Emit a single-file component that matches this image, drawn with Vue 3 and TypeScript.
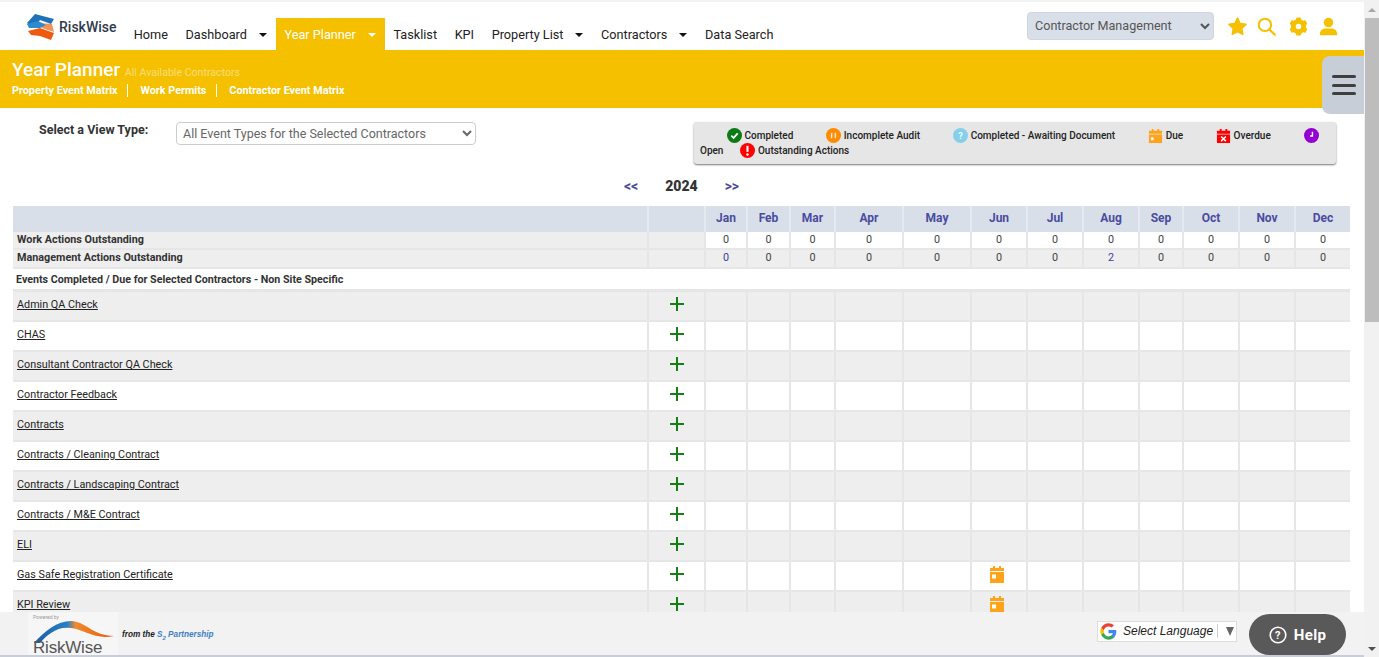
<script setup lang="ts">
interface NavItem {
  label: string
  caret?: boolean
  active?: boolean
}

interface Row {
  name: string
  due?: boolean
}

const nav: NavItem[] = [
  { label: 'Home' },
  { label: 'Dashboard', caret: true },
  { label: 'Year Planner', caret: true, active: true },
  { label: 'Tasklist' },
  { label: 'KPI' },
  { label: 'Property List', caret: true },
  { label: 'Contractors', caret: true },
  { label: 'Data Search' },
]

const months = ['Jan', 'Feb', 'Mar', 'Apr', 'May', 'Jun', 'Jul', 'Aug', 'Sep', 'Oct', 'Nov', 'Dec']
const colWidths = [42, 43, 45, 68, 68, 56, 56, 56, 44, 56, 56, 56]
const workActions = [0, 0, 0, 0, 0, 0, 0, 0, 0, 0, 0, 0]
const mgmtActions = [0, 0, 0, 0, 0, 0, 0, 2, 0, 0, 0, 0]
const gearTeeth = [0, 60, 120, 180, 240, 300]

const rows: Row[] = [
  { name: 'Admin QA Check' },
  { name: 'CHAS' },
  { name: 'Consultant Contractor QA Check' },
  { name: 'Contractor Feedback' },
  { name: 'Contracts' },
  { name: 'Contracts / Cleaning Contract' },
  { name: 'Contracts / Landscaping Contract' },
  { name: 'Contracts / M&E Contract' },
  { name: 'ELI' },
  { name: 'Gas Safe Registration Certificate', due: true },
  { name: 'KPI Review', due: true },
]
</script>

<template>
  <div class="page">
    <div class="content">
      <header class="topbar">
        <div class="logo">
          <svg width="30" height="28" viewBox="0 0 30 28">
            <path d="M12 10 L26 11 L28 19 L16 15 Z" fill="#f0925a" />
            <path d="M9 1 L28 6 L25 11 L14 7 L11 11 L3 12 L1 10 Z" fill="#1f72b8" />
            <path d="M1 11 L12 8 L20 12 L14 15 L3 15 Z" fill="#2c8bd0" />
            <path d="M2 18 L14 15 L28 20 L25 27 L14 23 L5 22 Z" fill="#ee5a12" />
          </svg>
          <span class="logo-text">RiskWise</span>
        </div>
        <nav class="nav">
          <a v-for="item in nav" :key="item.label" class="nav-item" :class="{ active: item.active }">
            {{ item.label }}<i v-if="item.caret" class="caret" />
          </a>
        </nav>
        <div class="tools">
          <select class="module-select">
            <option>Contractor Management</option>
          </select>
          <svg class="tool star" viewBox="0 0 24 24"><path d="M12 1.500 L15.300 8.200 L22.700 9.300 L17.300 14.500 L18.600 21.900 L12 18.400 L5.400 21.900 L6.700 14.500 L1.300 9.300 L8.700 8.200 Z" fill="#f5c000" stroke="#f5c000" stroke-width="2" stroke-linejoin="round" /></svg>
          <svg class="tool search" viewBox="0 0 24 24"><circle cx="10" cy="10" r="7.800" fill="none" stroke="#f5c000" stroke-width="2.600" /><path d="M15.800 15.800 L22.500 22.500" stroke="#f5c000" stroke-width="2.800" stroke-linecap="round" /></svg>
          <svg class="tool" viewBox="0 0 24 24">
            <circle cx="12" cy="12" r="6.500" fill="none" stroke="#f5c000" stroke-width="6" />
            <rect v-for="a in gearTeeth" :key="a" x="9" y="0.500" width="6" height="5" rx="1.200" fill="#f5c000" :transform="`rotate(${a} 12 12)`" />
          </svg>
          <svg class="tool" viewBox="0 0 24 24"><circle cx="12" cy="7" r="6" fill="#f5c000" /><path d="M1 23 C1 17 4 14.500 8 14.500 H16 C20 14.500 23 17 23 23 Z" fill="#f5c000" /></svg>
        </div>
      </header>

      <section class="band">
        <div class="band-title">Year Planner <small>All Available Contractors</small></div>
        <div class="band-links">
          <a>Property Event Matrix</a>
          <a>Work Permits</a>
          <a>Contractor Event Matrix</a>
        </div>
        <button class="burger"><span /><span /><span /></button>
      </section>

      <main class="main">
        <div class="filters">
          <label class="view-label">Select a View Type:</label>
          <select class="view-select">
            <option>All Event Types for the Selected Contractors</option>
          </select>
          <div class="legend">
            <svg class="lg" viewBox="0 0 16 16"><circle cx="8" cy="8" r="8" fill="#0b7a14" /><path d="M4.600 8.200 L7 10.600 L11.400 5.800" fill="none" stroke="#fff" stroke-width="1.800" /></svg> <span class="lt">Completed</span>
            <svg class="lg gap" viewBox="0 0 16 16"><circle cx="8" cy="8" r="8" fill="#ff8c00" /><path d="M6 5 V11 M10 5 V11" stroke="#fff" stroke-width="1.600" opacity=".8" /></svg> <span class="lt">Incomplete Audit</span>
            <svg class="lg gap" viewBox="0 0 16 16"><circle cx="8" cy="8" r="8" fill="#87ceeb" /><text x="8" y="11.500" text-anchor="middle" font-size="10" font-weight="700" fill="#dff" font-family="Roboto">?</text></svg> <span class="lt">Completed - Awaiting Document</span>
            <svg class="lg gap" viewBox="0 0 16 16"><path d="M1 3 H4 V1 H6 V3 H10 V1 H12 V3 H15 V6 H1 Z M1 7 H15 V16 H1 Z" fill="#ffa31a" /><rect x="3" y="10" width="3" height="3" fill="#fff" /></svg> <span class="lt">Due</span>
            <svg class="lg gap" viewBox="0 0 16 16"><path d="M1 3 H4 V1 H6 V3 H10 V1 H12 V3 H15 V6 H1 Z M1 7 H15 V16 H1 Z" fill="#f00" /><path d="M5.500 9 L10.500 14 M10.500 9 L5.500 14" stroke="#fff" stroke-width="1.600" /></svg> <span class="lt">Overdue</span>
            <svg class="lg gap" viewBox="0 0 16 16"><circle cx="8" cy="8" r="8" fill="#9400d3" /><path d="M8 4 V8.500 H5.500" transform="translate(1 0)" fill="none" stroke="#fff" stroke-width="1.500" /></svg> <span class="lt">Open</span>
            <svg class="lg gap-sm" viewBox="0 0 16 16"><circle cx="8" cy="8" r="8" fill="#f00" /><path d="M8 3 V9.500" stroke="#fff" stroke-width="2.200" /><circle cx="8" cy="12.200" r="1.300" fill="#fff" /></svg> <span class="lt">Outstanding Actions</span>
          </div>
        </div>

        <div class="year-nav">
          <a>&lt;&lt;</a>
          <strong>2024</strong>
          <a>&gt;&gt;</a>
        </div>

        <table class="grid">
          <colgroup>
            <col style="width: 634px" />
            <col style="width: 57px" />
            <col v-for="(w, i) in colWidths" :key="i" :style="{ width: w + 'px' }" />
          </colgroup>
          <thead>
            <tr class="head">
              <th /><th />
              <th v-for="m in months" :key="m">{{ m }}</th>
            </tr>
          </thead>
          <tbody>
            <tr class="count-row work">
              <td class="label"><b>Work Actions Outstanding</b></td>
              <td class="grey" />
              <td v-for="(n, i) in workActions" :key="i" class="num">{{ n }}</td>
            </tr>
            <tr class="count-row mgmt">
              <td class="label"><b>Management Actions Outstanding</b></td>
              <td />
              <td v-for="(n, i) in mgmtActions" :key="i" class="num" :class="{ linked: i === 0 || n > 0 }">{{ n }}</td>
            </tr>
            <tr class="section-row">
              <td colspan="14"><b>Events Completed / Due for Selected Contractors - Non Site Specific</b></td>
            </tr>
            <tr v-for="(row, r) in rows" :key="row.name" class="event-row" :class="{ odd: r % 2 === 0 }">
              <td class="label"><a>{{ row.name }}</a></td>
              <td class="center">
                <svg class="plus" viewBox="0 0 14 14"><path d="M7 0 V14 M0 7 H14" stroke="#128012" stroke-width="2" /></svg>
              </td>
              <td v-for="(m, i) in months" :key="m" class="center">
                <svg v-if="row.due && i === 5" class="cal" viewBox="0 0 16 18"><path d="M1 3 H4 V1 H6 V3 H10 V1 H12 V3 H15 V6 H1 Z M1 7 H15 V18 H1 Z" fill="#ffa31a" /><rect x="3" y="9.500" width="4" height="4" fill="#fff" /></svg>
              </td>
            </tr>
          </tbody>
        </table>
      </main>

      <footer class="footer">
        <div class="foot-logo">
          <span class="powered">Powered by</span>
          <svg class="swoosh" width="82" height="26" viewBox="0 0 82 26">
            <defs>
              <linearGradient id="sw" x1="0" y1="0" x2="1" y2="0">
                <stop offset="0" stop-color="#1b5fa8" />
                <stop offset=".42" stop-color="#2b7fc4" />
                <stop offset=".52" stop-color="#f08a2c" />
                <stop offset="1" stop-color="#e8590c" />
              </linearGradient>
            </defs>
            <path d="M1 24 C12 12 24 2 38 2 C52 2 60 17 81 17 C62 21 52 11 38 9 C24 7 14 16 7 24 Z" fill="url(#sw)" />
          </svg>
          <span class="foot-name">RiskWise</span>
        </div>
        <span class="partner">from the <em>S<sub>2</sub> Partnership</em></span>
        <div class="lang">
          <svg width="17" height="17" viewBox="0 0 24 24">
            <path d="M23 12.300c0-.8-.1-1.600-.2-2.300H12v4.400h6.200c-.3 1.400-1.100 2.600-2.300 3.400v2.900h3.700c2.100-2 3.400-4.900 3.400-8.400Z" fill="#4285f4" />
            <path d="M12 23.500c3.100 0 5.700-1 7.600-2.800l-3.700-2.900c-1 .7-2.300 1.100-3.900 1.100-3 0-5.500-2-6.400-4.800H1.800v3c1.900 3.800 5.800 6.400 10.200 6.400Z" fill="#34a853" />
            <path d="M5.600 14.100c-.5-1.400-.5-2.900 0-4.300v-3H1.800a11.500 11.500 0 0 0 0 10.300Z" fill="#fbbc05" />
            <path d="M12 4.800c1.700 0 3.200.6 4.400 1.700l3.300-3.300C17.700 1.400 15.100.4 12 .4 7.600.4 3.700 3 1.800 6.800l3.800 3C6.500 6.900 9 4.800 12 4.800Z" fill="#ea4335" />
          </svg>
          <span class="lang-text">Select Language</span>
          <span class="lang-arrow" />
        </div>
        <button class="help">
          <svg width="18" height="18" viewBox="0 0 18 18">
            <circle cx="9" cy="9" r="7.800" fill="none" stroke="#fff" stroke-width="1.600" />
            <text x="9" y="13" text-anchor="middle" font-size="11" font-weight="700" fill="#fff" font-family="Roboto">?</text>
          </svg>
          Help
        </button>
      </footer>
    </div>

    <div class="scrollbar">
      <i class="arrow up" />
      <div class="thumb" />
      <i class="arrow down" />
    </div>
  </div>
</template>

<style scoped>
.page {
  display: flex;
  height: 657px;
  overflow: hidden;
  font-family: Roboto, "Liberation Sans", sans-serif;
  color: #333;
  background: #fff;
}

.content {
  flex: 1;
  min-width: 0;
  display: flex;
  flex-direction: column;
}

.topbar {
  height: 50px;
  flex: none;
  display: flex;
  align-items: flex-end;
  border-top: 2px solid #f3f3f3;
  box-sizing: border-box;
}

.logo {
  width: 125px;
  height: 48px;
  padding-left: 26px;
  box-sizing: border-box;
  display: flex;
  align-items: flex-start;
  padding-top: 11px;
  gap: 3px;
  flex: none;
}

.logo-text {
  font-size: 14px;
  font-weight: 500;
  color: #2f3b4c;
  margin-top: 6px;
}

.nav {
  display: flex;
  height: 32px;
}

.nav-item {
  display: flex;
  align-items: center;
  height: 32px;
  padding: 1px 8.800px 0;
  font-size: 12.700px;
  color: #222;
  white-space: nowrap;
  box-sizing: border-box;
}

.nav-item.active {
  background: #f5c000;
  color: #fff;
}

.caret {
  margin-left: 12px;
  border-left: 4.500px solid transparent;
  border-right: 4.500px solid transparent;
  border-top: 4.500px solid #111;
}

.active .caret {
  border-top-color: #fff;
}

.tools {
  position: absolute;
  top: 12px;
  left: 1027px;
  display: flex;
  align-items: center;
}

.module-select {
  width: 187px;
  height: 28px;
  margin-right: 14px;
  padding: 0 0 2px 3px;
  background: #d9dfe9;
  border: 1px solid #d0d6e0;
  border-radius: 4px;
  font: 12.600px Roboto, sans-serif;
  color: #555;
}

.tool {
  width: 19px;
  height: 19px;
  margin-right: 11px;
}

.tool.star {
  margin-right: 10px;
}

.tool.search {
  margin-right: 13px;
}

.band {
  height: 58px;
  flex: none;
  position: relative;
  background: #f5c000;
  color: #fff;
  padding: 10px 12px 0;
  box-sizing: border-box;
}

.band-title {
  font-size: 19px;
  font-weight: 500;
  line-height: 20px;
}

.band-title small {
  font-size: 10.600px;
  font-weight: 400;
  color: #f9dc7a;
}

.band-links {
  display: flex;
  margin-top: 1px;
  font-size: 10.800px;
  font-weight: 700;
  line-height: 13px;
}

.band-links a {
  padding-right: 10px;
  margin-right: 12px;
  border-right: 1px solid #fff;
}

.band-links a:last-child {
  border-right: 0;
}

.burger {
  position: absolute;
  top: 6px;
  right: 0;
  width: 42px;
  height: 58px;
  padding: 0 0 0 10px;
  border: 0;
  border-radius: 8px 0 0 8px;
  background: #c8ced8;
  display: flex;
  flex-direction: column;
  gap: 5.500px;
  justify-content: center;
}

.burger span {
  width: 24px;
  height: 3px;
  border-radius: 2px;
  background: #3f3f3f;
}

.main {
  flex: 1;
  min-height: 0;
  overflow: hidden;
  padding: 0 14px 0 13px;
}

.filters {
  height: 56px;
  position: relative;
  display: flex;
  align-items: flex-start;
  padding-top: 14px;
  box-sizing: border-box;
}

.view-label {
  margin-left: 26px;
  width: 137px;
  font-size: 12.500px;
  font-weight: 700;
  line-height: 15px;
  flex: none;
}

.view-select {
  width: 300px;
  height: 23px;
  padding-left: 2px;
  background: #fff;
  border: 1px solid #ccc;
  border-radius: 4px;
  font: 12.500px Roboto, sans-serif;
  color: #666;
  flex: none;
}

.legend {
  position: absolute;
  top: 14px;
  left: 681px;
  width: 642px;
  height: 42px;
  box-sizing: border-box;
  padding: 6px 6px 0;
  background: #e6e6e6;
  border-radius: 3px;
  box-shadow: 0 1px 2px #777;
  font-size: 10px;
  font-weight: 500;
  line-height: 15px;
  color: #222;
}

.lg {
  width: 15px;
  height: 15px;
  vertical-align: -4px;
  margin-left: 27px;
}

.lg.gap {
  margin-left: 33px;
}

.lg.gap-sm {
  margin-left: 17px;
}

.year-nav {
  display: flex;
  justify-content: center;
  align-items: center;
  height: 42px;
  gap: 27px;
  padding-top: 2px;
  box-sizing: border-box;
  font-size: 14px;
  font-weight: 700;
  color: #4a4a9c;
}

.year-nav strong {
  color: #333;
}

.grid {
  width: 1337px;
  table-layout: fixed;
  border-collapse: separate;
  border-spacing: 0;
  font-size: 10.800px;
}

.grid td,
.grid th {
  padding: 0;
  border-left: 2px solid #e6e6e6;
  border-bottom: 2px solid #e6e6e6;
  box-sizing: border-box;
}

.grid td:first-child,
.grid th:first-child {
  border-left: 0;
}

.head th {
  height: 26px;
  padding-bottom: 2px;
  background: #d9dfe9;
  border-color: #e6eaf0;
  border-bottom: 0;
  color: #4a4ca0;
  font-size: 12px;
  font-weight: 700;
}

.count-row td {
  height: 18px;
  background: #eee;
}

.count-row.work td {
  padding-bottom: 1px;
}

.count-row.mgmt td {
  height: 19px;
  padding-bottom: 2px;
}

.count-row.work .num {
  background: #fff;
}

.num {
  text-align: center;
  color: #444;
}

.num.linked {
  color: #3f3f9e;
}

.label {
  padding-left: 4px !important;
  color: #333;
}

.label b {
  font-weight: 700;
}

.section-row td {
  height: 23px;
  padding-left: 3px;
  background: #fff;
  font-size: 10.700px;
  font-weight: 700;
  color: #333;
  border-left: 0;
  border-bottom: 3px solid #e6e6e6;
}

.section-row b {
  font-weight: 700;
}

.event-row td {
  height: 30px;
  background: #fff;
}

.event-row.odd td {
  background: #eee;
}

.event-row .label {
  vertical-align: middle;
  padding-bottom: 3px !important;
}

.event-row a {
  color: #222;
  text-decoration: underline;
}

.center {
  text-align: center;
  vertical-align: middle;
}

.plus {
  width: 14px;
  height: 14px;
  display: block;
  margin: 0 auto 5px;
}

.cal {
  width: 16px;
  height: 18px;
  display: block;
  margin: 0 auto 5px;
  transform: translateX(-2px);
}

.footer {
  height: 45px;
  flex: none;
  position: relative;
  display: flex;
  align-items: center;
  background: #f2f2f2;
  border-bottom: 2px solid #c8ced8;
  box-sizing: border-box;
}

.foot-logo {
  position: relative;
  width: 90px;
  height: 43px;
  margin-left: 28px;
  background: #f6f6f6;
  flex: none;
}

.powered {
  position: absolute;
  top: 2px;
  left: 5px;
  font-size: 5px;
  color: #999;
}

.swoosh {
  position: absolute;
  top: 7px;
  left: 5px;
}

.foot-name {
  position: absolute;
  left: 5px;
  bottom: -3px;
  font: 17px "Liberation Sans", sans-serif;
  color: #555;
  letter-spacing: -.2px;
}

.partner {
  margin: 3px 0 0 4px;
  font: italic 700 8.200px "Liberation Sans", sans-serif;
  color: #222;
}

.partner em {
  color: #3f7fc4;
}

.partner sub {
  font-size: 6px;
}

.lang {
  position: absolute;
  left: 1097px;
  top: 9px;
  width: 140px;
  height: 21px;
  box-sizing: border-box;
  display: flex;
  align-items: center;
  padding-left: 2px;
  background: #fff;
  border: 1px solid #ddd;
}

.lang-text {
  margin: 0 0 2px 6px;
  padding-right: 4px;
  border-right: 1px solid #ccc;
  font: italic 12px "Liberation Sans", sans-serif;
  color: #222;
}

.lang-arrow {
  margin-left: 8px;
  border-left: 4.500px solid transparent;
  border-right: 4.500px solid transparent;
  border-top: 9px solid #666;
}

.help {
  position: absolute;
  left: 1249px;
  top: 2px;
  width: 97px;
  height: 41px;
  display: flex;
  align-items: center;
  justify-content: center;
  gap: 7px;
  border: 0;
  border-radius: 21px;
  background: #595959;
  color: #fff;
  font: 700 15px Roboto, sans-serif;
  letter-spacing: .3px;
}

.scrollbar {
  width: 15px;
  flex: none;
  background: #f1f1f1;
  display: flex;
  flex-direction: column;
  align-items: center;
  position: relative;
}

.thumb {
  width: 14px;
  height: 304px;
  margin-top: 6px;
  background: #bdbdbd;
}

.arrow {
  border-left: 4px solid transparent;
  border-right: 4px solid transparent;
}

.arrow.up {
  margin-top: 8px;
  border-bottom: 4px solid #a8a8a8;
}

.arrow.down {
  position: absolute;
  bottom: 6px;
  border-top: 4px solid #505050;
}
</style>

<style>
body {
  margin: 0;
  overflow: hidden;
}
</style>
